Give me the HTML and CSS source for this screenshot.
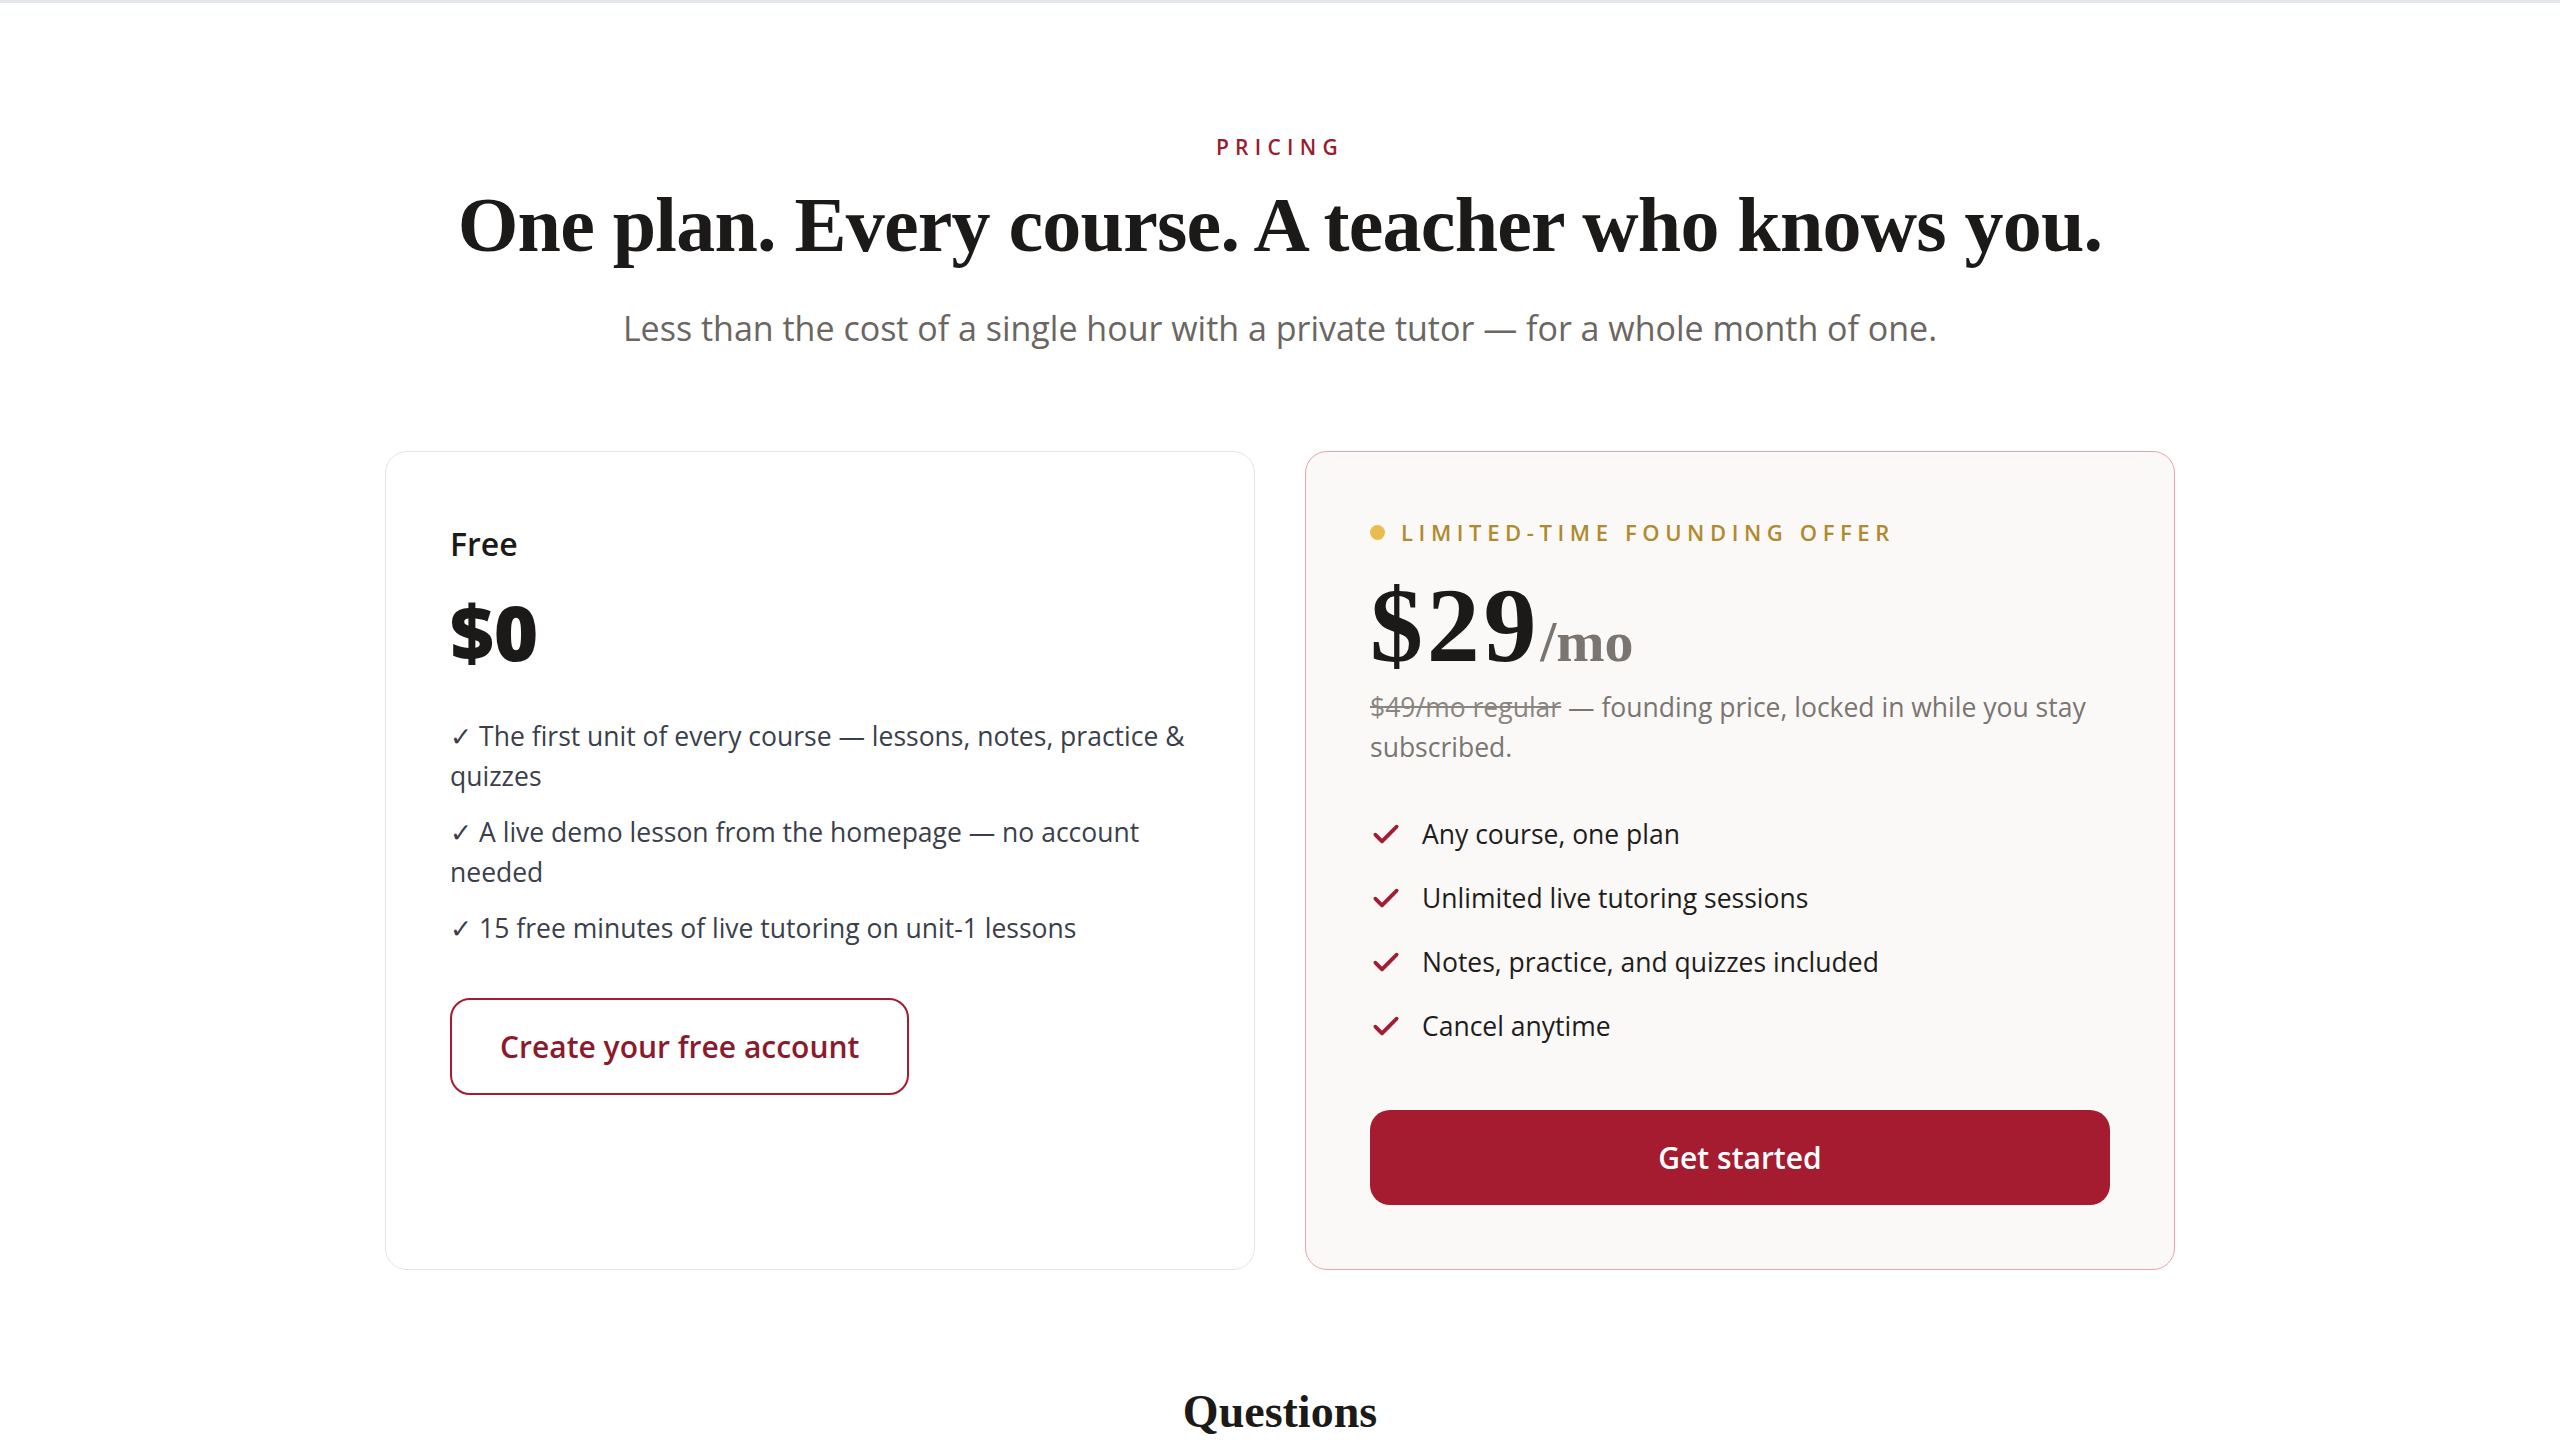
FILE: index.html
```html
<!DOCTYPE html>
<html lang="en">
  <head>
    <meta charset="UTF-8" />
    <meta name="viewport" content="width=device-width, initial-scale=1.0" />
    <title>Pricing</title>
    <link rel="stylesheet" href="styles.css">
  </head>
  <body>
    <div class="header-edge"></div>

    <!-- Pricing -->
    <section class="pricing">
      <p class="eyebrow">Pricing</p>
      <h1 class="pricing-title">One plan. Every course. A teacher who knows you.</h1>
      <p class="pricing-lede">Less than the cost of a single hour with a private tutor — for a whole month of one.</p>

      <div class="plans">
        <article class="plan">
          <h3 class="plan-name">Free</h3>
          <div class="plan-price">$0</div>
          <ul class="free-list">
            <li>✓ The first unit of every course — lessons, notes, practice &amp; quizzes</li>
            <li>✓ A live demo lesson from the homepage — no account needed</li>
            <li>✓ 15 free minutes of live tutoring on unit-1 lessons</li>
          </ul>
          <a class="btn btn-outline" href="#">Create your free account</a>
        </article>

        <article class="plan plan-featured">
          <div class="offer-tag"><span class="offer-dot"></span>Limited-time founding offer</div>
          <div class="featured-price">$29<span class="per">/mo</span></div>
          <p class="price-note"><s>$49/mo regular</s> — founding price, locked in while you stay subscribed.</p>
          <ul class="check-list">
            <li>
              <svg viewBox="0 0 24 24" class="check"><path d="M4 12.5l5 5L20 6.5" /></svg>
              Any course, one plan
            </li>
            <li>
              <svg viewBox="0 0 24 24" class="check"><path d="M4 12.5l5 5L20 6.5" /></svg>
              Unlimited live tutoring sessions
            </li>
            <li>
              <svg viewBox="0 0 24 24" class="check"><path d="M4 12.5l5 5L20 6.5" /></svg>
              Notes, practice, and quizzes included
            </li>
            <li>
              <svg viewBox="0 0 24 24" class="check"><path d="M4 12.5l5 5L20 6.5" /></svg>
              Cancel anytime
            </li>
          </ul>
          <a class="btn btn-solid" href="#">Get started</a>
        </article>
      </div>
    </section>

    <!-- FAQ -->
    <section class="faq">
      <h2 class="faq-title">Questions</h2>
    </section>
  </body>
</html>
```

FILE: styles.css
```css
/* Base */
body {
  margin: 0;
  padding: 0;
  font-family: 'Open Sans', 'DejaVu Sans', sans-serif;
  -webkit-font-smoothing: antialiased;
  background: #ffffff;
  color: #1c1a19;
}

.header-edge {
  height: 3px;
  background: #e2e6ea;
}

/* Pricing header */
.pricing {
  padding-top: 128px;
  text-align: center;
}

.eyebrow {
  margin: 0;
  font-size: 21px;
  line-height: 32px;
  font-weight: 600;
  letter-spacing: 0.3em;
  text-transform: uppercase;
  color: #9b1c31;
}

.pricing-title {
  margin: 15px 0 0;
  font-family: 'Liberation Serif', serif;
  font-size: 78px;
  line-height: 94px;
  font-weight: 700;
  letter-spacing: -0.01em;
  color: #1c1a19;
}

.pricing-lede {
  margin: 32px 0 0;
  font-size: 34px;
  line-height: 48px;
  color: #6b6661;
}

/* Plan cards */
.plans {
  display: grid;
  grid-template-columns: 1fr 1fr;
  gap: 50px;
  max-width: 1790px;
  margin: 99px auto 0;
  text-align: left;
}

.plan {
  border: 1px solid #e7e5e2;
  border-radius: 22px;
  padding: 64px;
  background: #ffffff;
}

.plan-featured {
  background: #faf9f7;
  border-color: #eba2b2;
}

.plan-name {
  margin: 6px 0 0;
  font-size: 32px;
  line-height: 44px;
  font-weight: 600;
}

.plan-price {
  margin-top: 24px;
  font-size: 76px;
  line-height: 84px;
  font-weight: 800;
}

.free-list {
  list-style: none;
  margin: 42px 0 0;
  padding: 0;
  display: flex;
  flex-direction: column;
  gap: 16px;
  font-size: 26.5px;
  line-height: 40px;
  color: #3a3f4b;
}

.btn {
  display: inline-flex;
  align-items: center;
  justify-content: center;
  box-sizing: border-box;
  border-radius: 20px;
  font-size: 30px;
  font-weight: 600;
  text-decoration: none;
}

.btn-outline {
  margin-top: 50px;
  height: 97px;
  padding: 0 48px;
  border: 2px solid #a51c30;
  color: #8d1a2c;
}

.btn-solid {
  display: flex;
  margin-top: 64px;
  height: 95px;
  background: #a51c30;
  color: #ffffff;
}

/* Featured card */
.offer-tag {
  display: flex;
  align-items: center;
  gap: 16px;
  font-size: 22px;
  line-height: 32px;
  font-weight: 600;
  letter-spacing: 0.255em;
  text-transform: uppercase;
  color: #b08a2e;
}

.offer-dot {
  width: 15px;
  height: 15px;
  border-radius: 50%;
  background: #e9bc4e;
}

.featured-price {
  margin-top: 28px;
  font-family: 'Liberation Serif', serif;
  font-size: 106px;
  line-height: 100px;
  font-weight: 700;
  letter-spacing: 0.035em;
  color: #1c1a19;
}

.featured-price .per {
  font-size: 58px;
  line-height: 58px;
  letter-spacing: 0;
  color: #7a7571;
}

.price-note {
  margin: 11px 0 0;
  font-size: 26.5px;
  line-height: 40px;
  color: #7a7571;
}

.price-note s {
  color: #8a8581;
}

.check-list {
  list-style: none;
  margin: 47px 0 0;
  padding: 0;
  display: flex;
  flex-direction: column;
  gap: 24px;
  font-size: 26.5px;
  line-height: 40px;
  color: #1f1d1c;
}

.check-list li {
  display: flex;
  align-items: center;
  gap: 20px;
}

.check {
  width: 32px;
  height: 32px;
  flex-shrink: 0;
  fill: none;
  stroke: #a51c30;
  stroke-width: 2.8;
  stroke-linecap: round;
  stroke-linejoin: round;
}

/* FAQ */
.faq {
  margin-top: 117px;
  text-align: center;
}

.faq-title {
  margin: 0;
  font-family: 'Liberation Serif', serif;
  font-size: 46px;
  line-height: 50px;
  font-weight: 700;
}
```
